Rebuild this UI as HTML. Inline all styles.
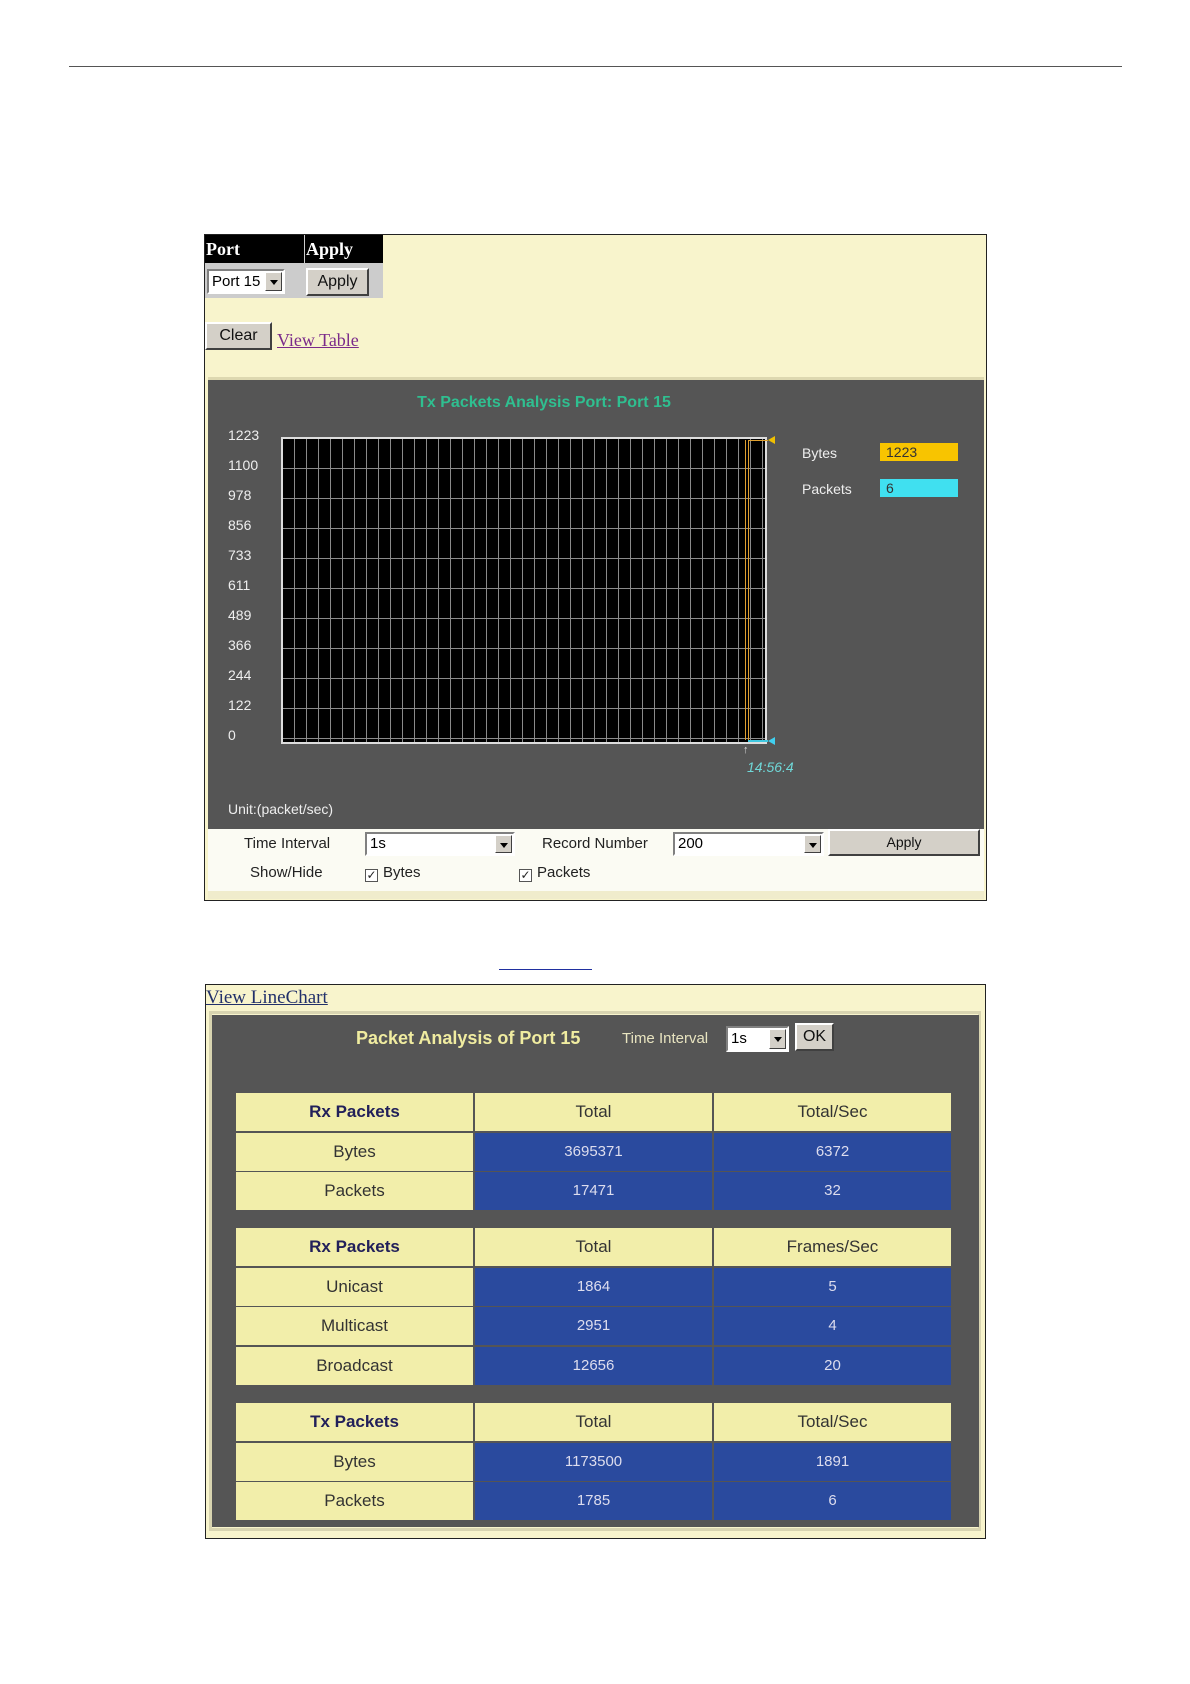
<!DOCTYPE html>
<html><head><meta charset="utf-8"><style>
*{margin:0;padding:0;box-sizing:border-box}
body{width:1190px;height:1684px;background:#fff;position:relative;font-family:"Liberation Sans",Arial,sans-serif;overflow:hidden}
.a{position:absolute}
.serif{font-family:"Liberation Serif","Times New Roman",serif}
.btn{position:absolute;background:#d4d0c8;border:2px solid;border-color:#fff #404040 #404040 #fff;font-size:15px;text-align:center;color:#111}
.sel{position:absolute;background:#fff;border:2px solid;border-color:#808080 #fff #fff #808080;font-size:15px;color:#000;padding-left:3px}
.arr{position:absolute;right:1px;top:1px;bottom:1px;width:17px;background:#d4d0c8;border:1px solid;border-color:#fff #404040 #404040 #fff}
.arr:after{content:"";position:absolute;left:4px;top:7px;border-left:4px solid transparent;border-right:4px solid transparent;border-top:5px solid #000}
.yl{position:absolute;left:228px;font-size:14px;color:#eee}
.cell{position:absolute;height:38px;line-height:38px;text-align:center;font-size:17px}
.y{background:#f2eeaa;color:#333}
.b{background:#2a4a9e;color:#dde;font-size:15px}
.h{font-weight:bold;color:#22205a}
.cb{display:inline-block;width:13px;height:13px;border:1px solid #555;background:#fff;vertical-align:-2px;margin-right:5px;font-size:12px;line-height:11px;text-align:center}
</style></head><body>
<div class="a" style="left:69px;top:66px;width:1053px;height:1px;background:#555"></div>

<div class="a" style="left:204px;top:234px;width:783px;height:667px;background:#f8f4cc;border:1px solid #222"></div>
<div class="a" style="left:205px;top:235px;width:178px;height:28px;background:#000"></div>
<div class="a serif" style="left:206px;top:239px;color:#fff;font-weight:bold;font-size:18px">Port</div>
<div class="a" style="left:304px;top:235px;width:1px;height:28px;background:#ccc"></div>
<div class="a serif" style="left:306px;top:239px;color:#fff;font-weight:bold;font-size:18px">Apply</div>
<div class="a" style="left:205px;top:263px;width:178px;height:35px;background:#ccc"></div>
<div class="sel" style="left:207px;top:269px;width:78px;height:25px;line-height:21px">Port 15<div class="arr"></div></div>
<div class="btn" style="left:306px;top:268px;width:63px;height:28px;line-height:24px;font-size:16px">Apply</div>
<div class="btn" style="left:205px;top:322px;width:67px;height:28px;line-height:24px;font-size:16px">Clear</div>
<div class="a serif" style="left:277px;top:330px;color:#7a2a8a;font-size:18px;text-decoration:underline">View Table</div>

<div class="a" style="left:208px;top:377px;width:776px;height:452px;background:#555;border-top:3px solid #ddd8b0"></div>
<div class="a" style="left:208px;top:394px;width:672px;text-align:center;color:#2fbf90;font-weight:bold;font-size:16px">Tx Packets Analysis Port: Port 15</div>

<div class="yl" style="top:427px">1223</div>
<div class="yl" style="top:457px">1100</div>
<div class="yl" style="top:487px">978</div>
<div class="yl" style="top:517px">856</div>
<div class="yl" style="top:547px">733</div>
<div class="yl" style="top:577px">611</div>
<div class="yl" style="top:607px">489</div>
<div class="yl" style="top:637px">366</div>
<div class="yl" style="top:667px">244</div>
<div class="yl" style="top:697px">122</div>
<div class="yl" style="top:727px">0</div>

<div class="a" style="left:281px;top:437px;width:486px;height:307px;border:2px solid #ddd;background-color:#000;background-image:repeating-linear-gradient(90deg,transparent 0,transparent 11px,#8a8a8a 11px,#8a8a8a 12px),repeating-linear-gradient(180deg,transparent 0,transparent 29px,#8a8a8a 29px,#8a8a8a 30px)"></div>
<div class="a" style="left:748px;top:440px;width:1px;height:300px;background:#e0a030"></div>
<div class="a" style="left:745px;top:440px;width:1px;height:300px;background:#e0a030"></div>
<div class="a" style="left:748px;top:440px;width:20px;height:1px;background:#e0a030"></div>
<div class="a" style="left:768px;top:436px;border-right:7px solid #f0c000;border-top:4px solid transparent;border-bottom:4px solid transparent"></div>
<div class="a" style="left:748px;top:740px;width:20px;height:2px;background:#40c8e0"></div>
<div class="a" style="left:768px;top:737px;border-right:7px solid #40d0f0;border-top:4px solid transparent;border-bottom:4px solid transparent"></div>
<div class="a" style="left:743px;top:744px;color:#ddd;font-size:11px">↑</div>
<div class="a" style="left:747px;top:759px;color:#6fd8d8;font-size:14px;font-style:italic">14:56:4</div>

<div class="a" style="left:802px;top:445px;color:#eee;font-size:14px">Bytes</div>
<div class="a" style="left:880px;top:443px;width:78px;height:18px;background:#f8c400;font-size:14px;padding-left:6px;line-height:18px;color:#333">1223</div>
<div class="a" style="left:802px;top:481px;color:#eee;font-size:14px">Packets</div>
<div class="a" style="left:880px;top:479px;width:78px;height:18px;background:#40e0f0;font-size:14px;padding-left:6px;line-height:18px;color:#333">6</div>
<div class="a" style="left:228px;top:801px;color:#eee;font-size:14px">Unit:(packet/sec)</div>

<div class="a" style="left:208px;top:829px;width:776px;height:62px;background:#fbfbf3"></div>
<div class="a" style="left:208px;top:891px;width:776px;height:8px;background:#f0eccc"></div>
<div class="a" style="left:244px;top:835px;font-size:15px;color:#222">Time Interval</div>
<div class="sel" style="left:365px;top:832px;width:150px;height:24px;line-height:20px">1s<div class="arr"></div></div>
<div class="a" style="left:542px;top:835px;font-size:15px;color:#222">Record Number</div>
<div class="sel" style="left:673px;top:832px;width:151px;height:24px;line-height:20px">200<div class="arr"></div></div>
<div class="btn" style="left:828px;top:829px;width:152px;height:27px;line-height:23px;font-size:14px">Apply</div>
<div class="a" style="left:250px;top:864px;font-size:15px;color:#222">Show/Hide</div>
<div class="a" style="left:365px;top:864px;font-size:15px;color:#222"><span class="cb">✓</span>Bytes</div>
<div class="a" style="left:519px;top:864px;font-size:15px;color:#222"><span class="cb">✓</span>Packets</div>

<div class="a" style="left:499px;top:969px;width:93px;height:1px;background:#2030a0"></div>

<div class="a" style="left:205px;top:984px;width:781px;height:555px;background:#f8f4cc;border:1px solid #222"></div>
<div class="a serif" style="left:206px;top:987px;color:#22306a;font-size:19px;text-decoration:underline">View LineChart</div>
<div class="a" style="left:209px;top:1011px;width:772px;height:520px;border:3px solid #d8d4b0"></div>
<div class="a" style="left:212px;top:1015px;width:767px;height:512px;background:#555"></div>
<div class="a" style="left:356px;top:1028px;color:#f0eca0;font-weight:bold;font-size:18px">Packet Analysis of Port 15</div>
<div class="a" style="left:622px;top:1030px;color:#e8e4c0;font-size:15px">Time Interval</div>
<div class="sel" style="left:726px;top:1026px;width:63px;height:26px;line-height:22px">1s<div class="arr"></div></div>
<div class="btn" style="left:795px;top:1023px;width:39px;height:28px;line-height:24px;font-size:16px">OK</div>

<div class="cell y h" style="left:236px;top:1093px;width:237px">Rx Packets</div>
<div class="cell y" style="left:475px;top:1093px;width:237px">Total</div>
<div class="cell y" style="left:714px;top:1093px;width:237px">Total/Sec</div>
<div class="cell y" style="left:236px;top:1133px;width:237px">Bytes</div>
<div class="cell b" style="left:475px;top:1133px;width:237px">3695371</div>
<div class="cell b" style="left:714px;top:1133px;width:237px">6372</div>
<div class="cell y" style="left:236px;top:1172px;width:237px">Packets</div>
<div class="cell b" style="left:475px;top:1172px;width:237px">17471</div>
<div class="cell b" style="left:714px;top:1172px;width:237px">32</div>

<div class="cell y h" style="left:236px;top:1228px;width:237px">Rx Packets</div>
<div class="cell y" style="left:475px;top:1228px;width:237px">Total</div>
<div class="cell y" style="left:714px;top:1228px;width:237px">Frames/Sec</div>
<div class="cell y" style="left:236px;top:1268px;width:237px">Unicast</div>
<div class="cell b" style="left:475px;top:1268px;width:237px">1864</div>
<div class="cell b" style="left:714px;top:1268px;width:237px">5</div>
<div class="cell y" style="left:236px;top:1307px;width:237px">Multicast</div>
<div class="cell b" style="left:475px;top:1307px;width:237px">2951</div>
<div class="cell b" style="left:714px;top:1307px;width:237px">4</div>
<div class="cell y" style="left:236px;top:1347px;width:237px">Broadcast</div>
<div class="cell b" style="left:475px;top:1347px;width:237px">12656</div>
<div class="cell b" style="left:714px;top:1347px;width:237px">20</div>

<div class="cell y h" style="left:236px;top:1403px;width:237px">Tx Packets</div>
<div class="cell y" style="left:475px;top:1403px;width:237px">Total</div>
<div class="cell y" style="left:714px;top:1403px;width:237px">Total/Sec</div>
<div class="cell y" style="left:236px;top:1443px;width:237px">Bytes</div>
<div class="cell b" style="left:475px;top:1443px;width:237px">1173500</div>
<div class="cell b" style="left:714px;top:1443px;width:237px">1891</div>
<div class="cell y" style="left:236px;top:1482px;width:237px">Packets</div>
<div class="cell b" style="left:475px;top:1482px;width:237px">1785</div>
<div class="cell b" style="left:714px;top:1482px;width:237px">6</div>
</body></html>
